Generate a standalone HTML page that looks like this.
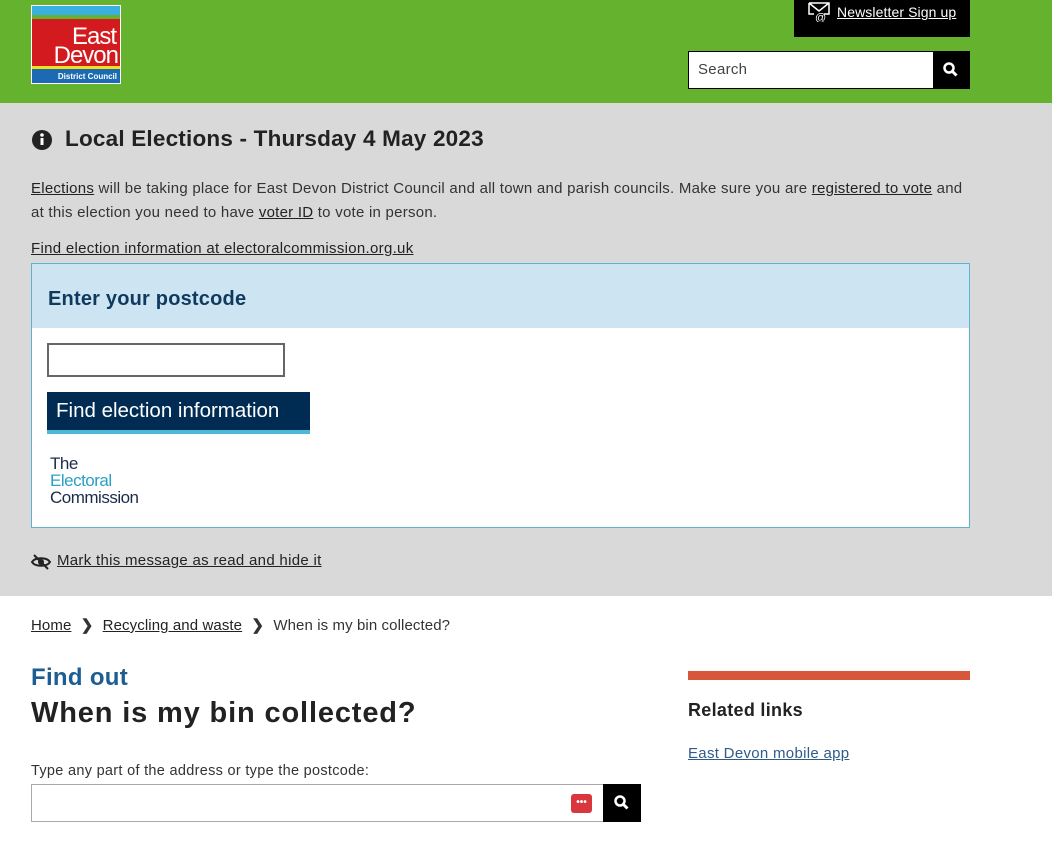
<!DOCTYPE html>
<html><head><meta charset="utf-8"><style>
*{box-sizing:border-box;margin:0;padding:0}
body{width:1052px;height:850px;overflow:hidden;font-family:"Liberation Sans",sans-serif;color:#222;background:#fff;position:relative}
.abs{position:absolute}
a{color:#222;text-decoration:underline}
.os{letter-spacing:.3px}
</style></head><body>
<div class="abs" style="left:0;top:0;width:1052px;height:103px;background:#65b22e"></div>
<div class="abs" style="left:31px;top:5px;width:90px;height:79px;background:#fff;padding:1px">
 <div style="height:9px;background:#3ab0e0"></div>
 <div style="height:4px;background:#65b22e"></div>
 <div style="height:47px;background:#d21a1f;position:relative;color:#fff;font-size:24px;line-height:20px;letter-spacing:-1px">
  <div class="abs" style="right:4px;top:8px">East</div>
  <div class="abs" style="right:2px;top:27px">Devon</div>
 </div>
 <div style="height:3px;background:#f3e11b"></div>
 <div style="height:14px;background:#1b6ab3;color:#fff;font-size:8px;font-weight:bold;text-align:right;padding:3px 3px 0 0">District Council</div>
</div>
<div class="abs" style="left:794px;top:0;width:176px;height:37px;background:#000;color:#fff;font-size:14px;letter-spacing:.1px">
 <svg class="abs" style="left:14px;top:2px" width="22" height="20" viewBox="0 0 22 20"><path d="M1 1h20v11h-5M1 1v11h5M1 1l10 8 10-8" fill="none" stroke="#fff" stroke-width="1.5"/><text x="7" y="19" font-size="11" fill="#fff" font-family="Liberation Sans">@</text></svg>
 <a class="abs" style="left:43px;top:4px;color:#fff">Newsletter Sign up</a>
</div>
<div class="abs" style="left:688px;top:51px;width:282px;height:38px;border:1px solid #000;background:#fff">
 <span class="abs os" style="left:9px;top:9px;font-size:15px;color:#444">Search</span>
 <div class="abs" style="right:0;top:0;width:36px;height:36px;background:#000"><svg width="36" height="36"><circle cx="16" cy="16" r="4.5" fill="none" stroke="#fff" stroke-width="2.5"/><path d="M19.5 19.5l4 4" stroke="#fff" stroke-width="3"/></svg></div>
</div>
<div class="abs" style="left:0;top:103px;width:1052px;height:493px;background:#d9d9d9"></div>
<svg class="abs" style="left:31px;top:129px" width="22" height="22"><circle cx="11" cy="11" r="10" fill="#222"/><rect x="9.5" y="9" width="3" height="7" fill="#fff"/><circle cx="11" cy="6" r="1.8" fill="#fff"/></svg>
<div class="abs" style="left:65px;top:126px;font-size:22.5px;font-weight:bold;letter-spacing:.2px">Local Elections - Thursday 4 May 2023</div>
<div class="abs" style="left:31px;top:177px;width:940px;font-size:15px;line-height:24px;color:#333;letter-spacing:.25px"><a>Elections</a> will be taking place for East Devon District Council and all town and parish councils. Make sure you are <a>registered to vote</a> and at this election you need to have <a>voter ID</a> to vote in person.</div>
<a class="abs os" style="left:31px;top:240px;font-size:15px">Find election information at electoralcommission.org.uk</a>
<div class="abs" style="left:31px;top:263px;width:939px;height:265px;border:1px solid #5fb3d0;background:#fff">
 <div style="height:64px;background:#cde4f2;padding:24px 0 0 16px;font-size:20px;font-weight:bold;color:#0f3a5e;letter-spacing:.2px">Enter your postcode</div>
 <div class="abs" style="left:15px;top:79px;width:238px;height:34px;border:2px solid #666"></div>
 <div class="abs" style="left:15px;top:128px;width:263px;height:42px;background:#002c54;border-bottom:4px solid #4fb8d4;color:#fff;font-size:20.5px;padding:7px 0 0 9px">Find election information</div>
 <div class="abs" style="left:18px;top:191px;font-size:17px;line-height:17px;color:#1b2c4a;letter-spacing:-.5px">The<br><span style="color:#2a9fc4">Electoral</span><br>Commission</div>
</div>
<svg class="abs" style="left:31px;top:554px" width="20" height="16" viewBox="0 0 20 16"><path d="M1 8c3-5 15-5 18 0c-3 5-15 5-18 0z" fill="none" stroke="#222" stroke-width="2"/><circle cx="10" cy="8" r="3" fill="#222"/><path d="M3 1l14 14" stroke="#222" stroke-width="2"/></svg>
<a class="abs" style="left:57px;top:552px;font-size:15px;letter-spacing:.3px">Mark this message as read and hide it</a>
<div class="abs" style="left:31px;top:616px;font-size:15px;color:#333;white-space:nowrap;letter-spacing:.1px"><a>Home</a> <span style="display:inline-block;margin:0 5px;font-weight:bold">&#x276F;</span> <a>Recycling and waste</a> <span style="display:inline-block;margin:0 5px;font-weight:bold">&#x276F;</span> When is my bin collected?</div>
<div class="abs" style="left:31px;top:664px;font-size:24px;font-weight:bold;color:#1d5d91;letter-spacing:.3px">Find out</div>
<div class="abs" style="left:31px;top:697px;font-size:29px;font-weight:bold;color:#222;letter-spacing:.85px">When is my bin collected?</div>
<div class="abs os" style="left:31px;top:763px;font-size:14.5px;color:#333">Type any part of the address or type the postcode:</div>
<div class="abs" style="left:31px;top:784px;width:610px;height:38px;border:1px solid #aaa;background:#fff">
 <div class="abs" style="left:539px;top:9px;width:21px;height:19px;background:#d9363e;border-radius:3px;color:#fff;font-size:10px;text-align:center;line-height:17px;font-weight:bold">•••</div>
 <div class="abs" style="right:-1px;top:-1px;width:38px;height:38px;background:#000"><svg width="38" height="38"><circle cx="17" cy="17" r="4.5" fill="none" stroke="#fff" stroke-width="2.5"/><path d="M20.5 20.5l4 4" stroke="#fff" stroke-width="3"/></svg></div>
</div>
<div class="abs" style="left:688px;top:671px;width:282px;height:9px;background:#d6573a"></div>
<div class="abs" style="left:688px;top:700px;font-size:18px;font-weight:bold;letter-spacing:.3px">Related links</div>
<a class="abs os" style="left:688px;top:745px;font-size:15px;color:#2f5a8a">East Devon mobile app</a>
</body></html>
